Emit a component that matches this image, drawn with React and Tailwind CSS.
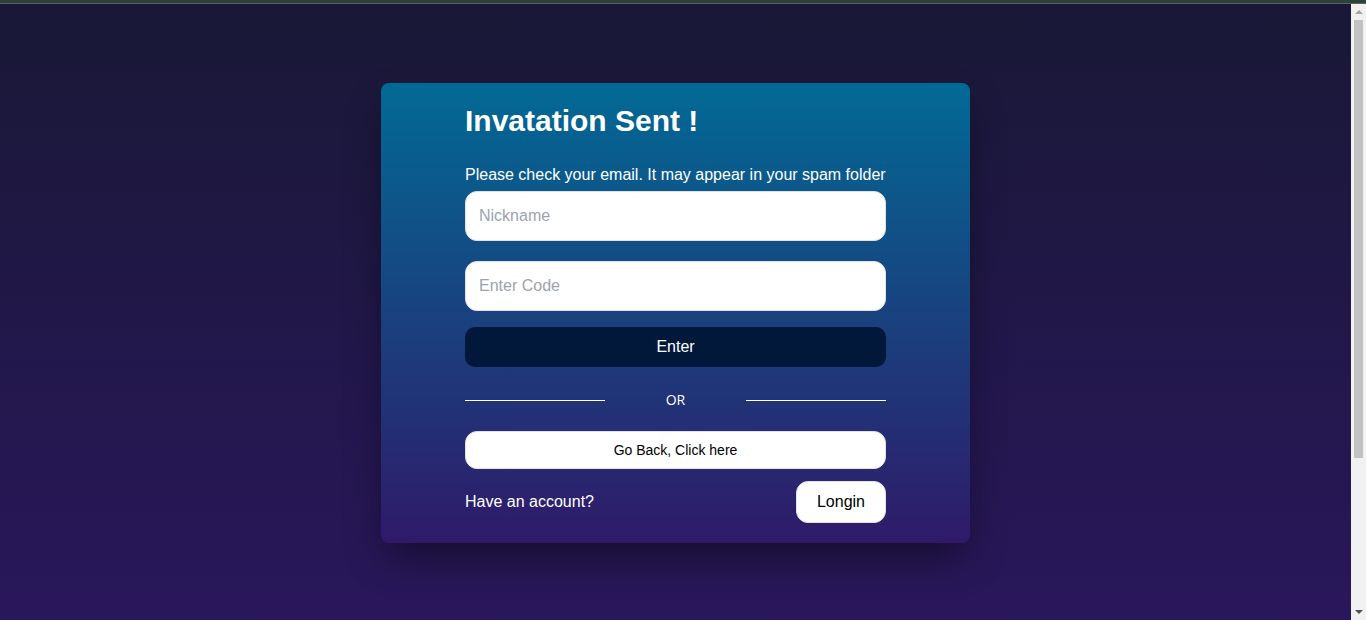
export default function App() {
  return (
    <div className="flex h-screen flex-col font-['Liberation_Sans',Arial,sans-serif]">
      {/* top strip */}
      <div className="h-[4px] shrink-0 border-b border-[#56625a] bg-[#2c423c]" />

      <div className="flex min-h-0 flex-1">
        {/* page */}
        <div className="min-w-0 flex-1 overflow-hidden bg-[linear-gradient(to_bottom,#191836,#29175b)]">
          <div className="pt-[79px]">
            <div className="mx-auto w-[589px] rounded-lg bg-[linear-gradient(to_bottom,#026a95,#2f1a69)] px-[84px] pt-[20px] pb-5 shadow-[0_20px_40px_-6px_rgba(0,0,0,0.45)]">
              <h1 className="text-3xl leading-[36px] font-bold text-white">Invatation Sent !</h1>

              <p className="mt-[27px] text-base leading-[18px] text-white">
                Please check your email. It may appear in your spam folder
              </p>

              <input
                type="text"
                placeholder="Nickname"
                className="mt-[7px] block h-[50px] w-full rounded-xl border border-[#dfe3e8] bg-white px-[13px] text-base text-black outline-none placeholder:text-[#9ca3af]"
              />
              <input
                type="text"
                placeholder="Enter Code"
                className="mt-5 block h-[50px] w-full rounded-xl border border-[#dfe3e8] bg-white px-[13px] text-base text-black outline-none placeholder:text-[#9ca3af]"
              />

              <button className="mt-4 block h-[40px] w-full rounded-[10px] bg-[#02183a] text-base text-white">
                Enter
              </button>

              {/* divider */}
              <div className="mt-[23px] flex h-5 items-center">
                <div className="h-px w-[140px] bg-white" />
                <span className="flex-1 text-center font-['Open_Sans',sans-serif] text-sm text-white">OR</span>
                <div className="h-px w-[140px] bg-white" />
              </div>

              <button className="mt-[21px] block h-[38px] w-full rounded-xl border border-[#dfe3e8] bg-white text-sm text-black">
                Go Back, Click here
              </button>

              <div className="mt-3 flex items-center justify-between">
                <span className="text-base text-white">Have an account?</span>
                <button className="h-[42px] w-[90px] rounded-xl border border-[#dfe3e8] bg-white text-base text-black">
                  Longin
                </button>
              </div>
            </div>
          </div>
        </div>

        {/* scrollbar */}
        <div className="flex w-[15px] shrink-0 flex-col items-center bg-[#f1f1f1]">
          <div className="mt-[6px] h-0 w-0 border-x-[4px] border-b-[4px] border-x-transparent border-b-[#a3a3a3]" />
          <div className="mt-[6px] h-[438px] w-[9px] bg-[#c1c1c1]" />
          <div className="flex-1" />
          <div className="mb-[6px] h-0 w-0 border-x-[4px] border-t-[4px] border-x-transparent border-t-[#505050]" />
        </div>
      </div>
    </div>
  )
}
